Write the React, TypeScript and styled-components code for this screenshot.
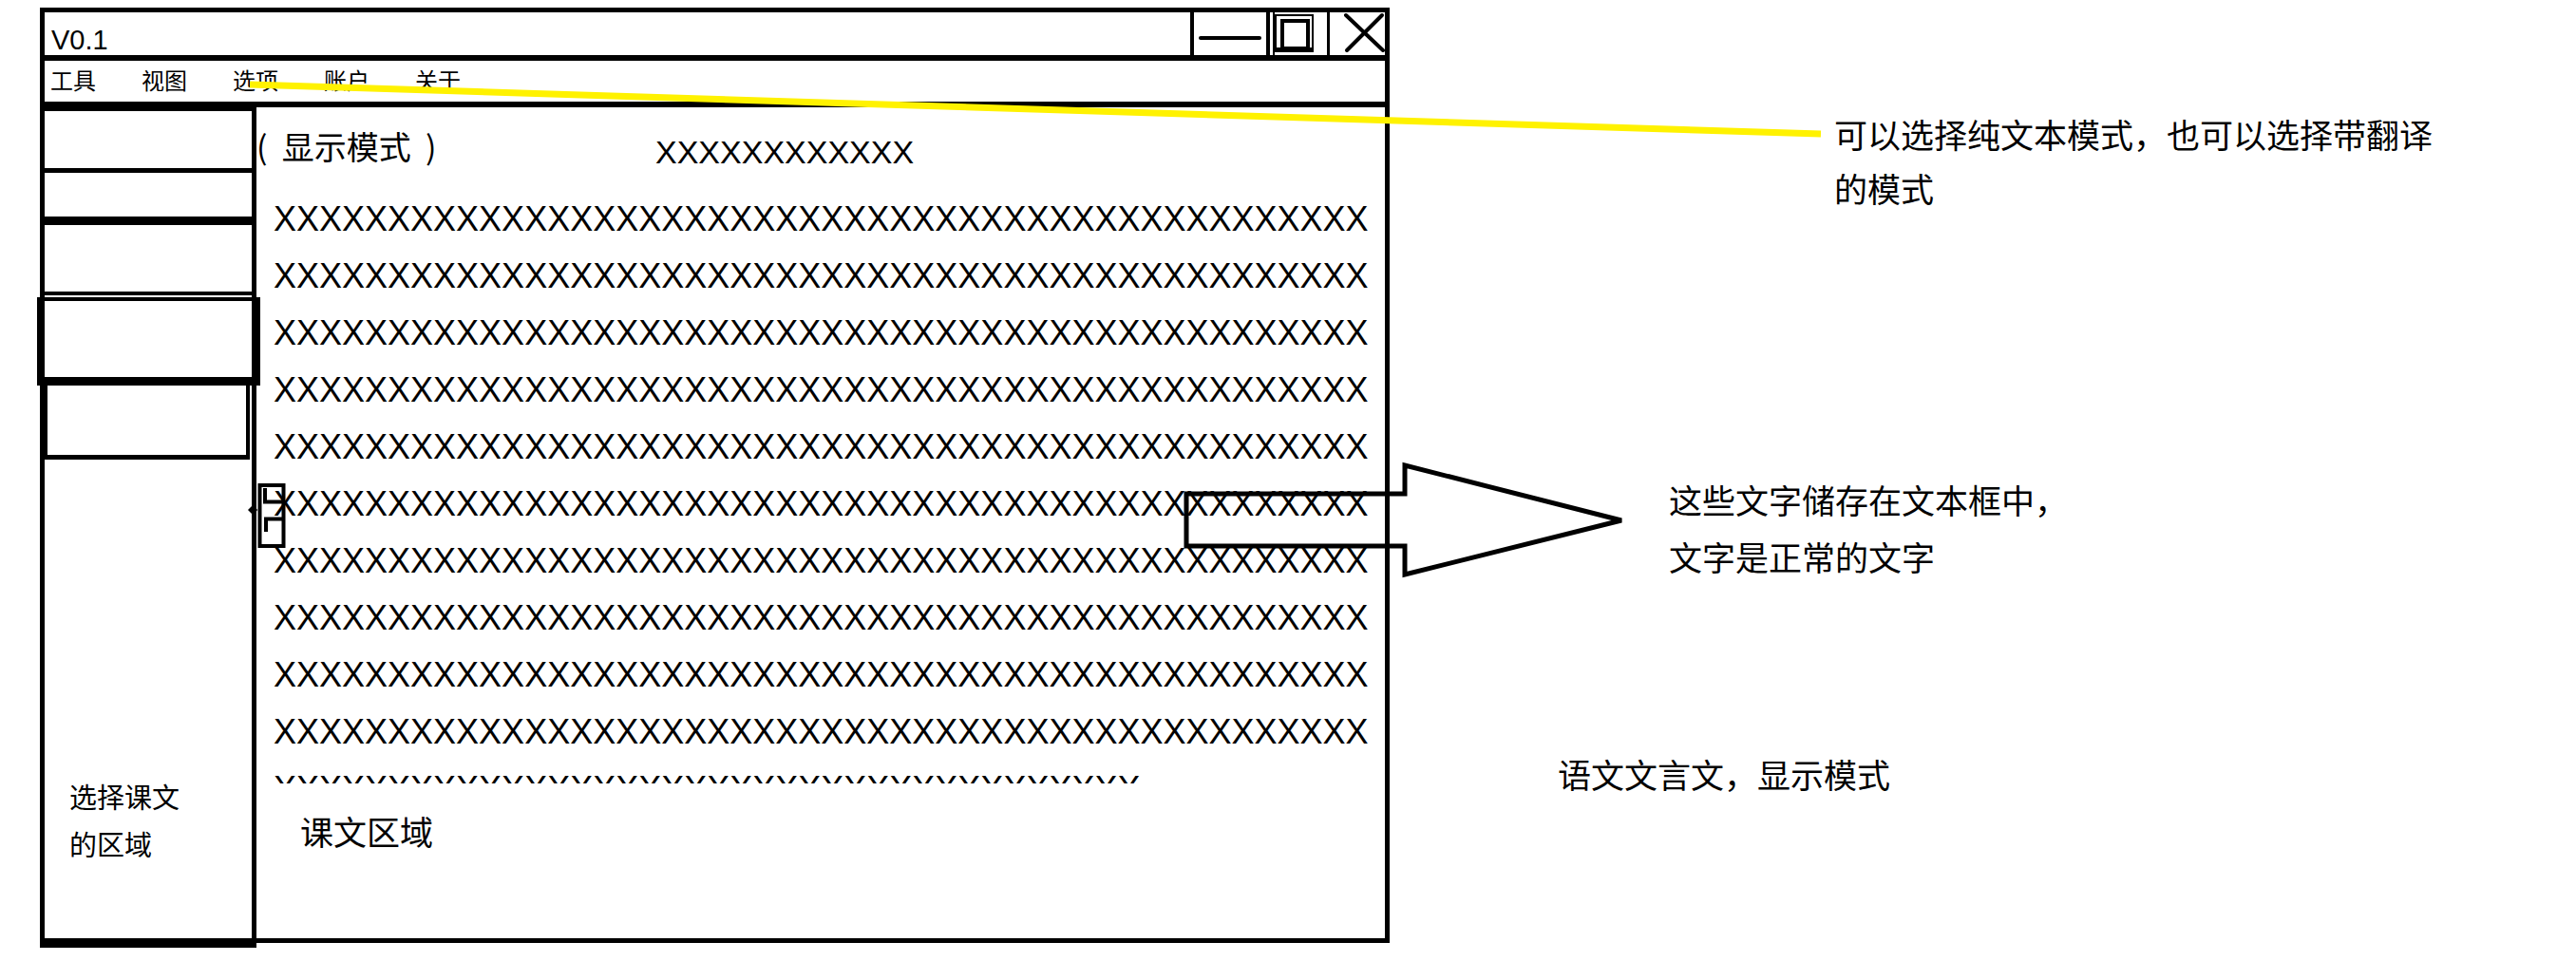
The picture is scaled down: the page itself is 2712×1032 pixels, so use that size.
import React from "react";
import styled, { createGlobalStyle } from "styled-components";

const CJK = `"Noto Sans CJK SC", "Noto Sans", sans-serif`;
const LATIN = `"Liberation Sans", Arial, sans-serif`;

const GlobalStyle = createGlobalStyle`
  *, *::before, *::after { box-sizing: border-box; }
  html, body { margin: 0; padding: 0; background: #ffffff; }
  body { font-family: ${CJK}; color: #000000; }
`;

const Canvas = styled.div`
  position: relative;
  width: 2712px;
  height: 1032px;
  overflow: hidden;
  background: #ffffff;
  padding: 8px 0 0 42px;
`;

const Window = styled.div`
  width: 1421px;
  height: 985px;
  border: 5px solid #000;
  display: flex;
  flex-direction: column;
`;

const TitleBar = styled.div`
  height: 51px;
  flex-shrink: 0;
  border-bottom: 6px solid #000;
  display: flex;
  justify-content: space-between;
  padding-left: 7px;
`;

const TitleText = styled.div`
  align-self: flex-end;
  margin-bottom: 1px;
  font-family: ${LATIN};
  font-size: 29px;
  line-height: 30px;
`;

const Controls = styled.svg`
  display: block;
  flex-shrink: 0;
  width: 208px;
  height: 45px;
`;

const MenuBar = styled.div`
  height: 49px;
  flex-shrink: 0;
  border-bottom: 6px solid #000;
  display: flex;
  align-items: center;
  gap: 48px;
  padding: 0 0 5px 6px;
  font-family: ${CJK};
  font-size: 24px;
`;

const MenuItem = styled.span`
  display: block;
`;

const Body = styled.div`
  flex: 1;
  min-height: 0;
  display: flex;
`;

const Sidebar = styled.aside`
  width: 228px;
  flex-shrink: 0;
  margin-left: -5px;
  margin-bottom: -10px;
  border-left: 5px solid #000;
  border-right: 5px solid #000;
  border-top: 4px solid #000;
  border-bottom: 10px solid #000;
  display: flex;
  flex-direction: column;
`;

const Slot = styled.div<{ $h: number; $b: number; $gap?: number }>`
  height: ${(p) => p.$h}px;
  flex-shrink: 0;
  border-bottom: ${(p) => p.$b}px solid #000;
  margin-bottom: ${(p) => p.$gap ?? 0}px;
`;

const FramedSlot = styled.div`
  height: 93px;
  flex-shrink: 0;
  margin: 0 -9px 0 -8px;
  border-style: solid;
  border-color: #000;
  border-width: 4px 9px 9px 8px;
`;

const InsetSlot = styled.div`
  height: 78px;
  flex-shrink: 0;
  margin-right: 2px;
  border-style: solid;
  border-color: #000;
  border-width: 0 4px 5px 3px;
`;

const SideNote = styled.div`
  margin-top: auto;
  padding: 0 0 75px 26px;
  font-family: ${CJK};
  font-size: 29px;
  line-height: 50px;
`;

const Main = styled.main`
  flex: 1;
  min-width: 0;
  display: flex;
  flex-direction: column;
  padding-top: 21px;
`;

const HeaderRow = styled.div`
  display: flex;
  align-items: flex-start;
`;

const ModeLabel = styled.div`
  width: 420px;
  flex-shrink: 0;
  font-family: ${CJK};
  font-size: 34px;
  line-height: 40px;
  white-space: pre;
`;

const HeaderTitle = styled.div`
  margin-top: 6px;
  font-family: ${LATIN};
  font-size: 34px;
  line-height: 40px;
`;

const TextBox = styled.div`
  margin: 21px 0 0 18px;
  height: 624px;
  overflow: hidden;
  font-family: ${LATIN};
  font-size: 36px;
  line-height: 60px;
  white-space: nowrap;
`;

const TextLine = styled.div`
  height: 60px;
`;

const LessonLabel = styled.div`
  margin: 30px 0 0 46px;
  font-family: ${CJK};
  font-size: 35px;
  line-height: 40px;
`;

const Overlay = styled.svg`
  position: absolute;
  left: 0;
  top: 0;
  width: 2712px;
  height: 1032px;
  pointer-events: none;
`;

const Note = styled.div<{ $x: number; $y: number; $lh: number }>`
  position: absolute;
  left: ${(p) => p.$x}px;
  top: ${(p) => p.$y}px;
  font-family: ${CJK};
  font-size: 35px;
  line-height: ${(p) => p.$lh}px;
  white-space: nowrap;
`;

const menus = ["工具", "视图", "选项", "账户", "关于"];
const fullRow = "X".repeat(48);
const rows = [...Array(10).fill(fullRow), "X".repeat(38)];

function WindowControls() {
  return (
    <Controls viewBox="0 0 208 45">
      <rect x={3} y={0} width={4} height={45} fill="#000" />
      <rect x={12} y={25} width={66} height={4} rx={2} fill="#000" />
      <rect x={83} y={0} width={4} height={45} fill="#000" />
      <rect x={90} y={0} width={2} height={45} fill="#000" />
      <rect x={93} y={3} width={39} height={38} fill="none" stroke="#000" strokeWidth={2} />
      <rect x={100} y={9} width={27} height={29} fill="none" stroke="#000" strokeWidth={4} />
      <rect x={92} y={37} width={41} height={5} fill="#000" />
      <rect x={147} y={0} width={3} height={45} fill="#000" />
      <line x1={167} y1={3} x2={206} y2={40} stroke="#000" strokeWidth={4} strokeLinecap="round" />
      <line x1={205} y1={3} x2={168} y2={40} stroke="#000" strokeWidth={4} strokeLinecap="round" />
    </Controls>
  );
}

export default function App() {
  return (
    <>
      <GlobalStyle />
      <Canvas>
        <Window>
          <TitleBar>
            <TitleText>V0.1</TitleText>
            <WindowControls />
          </TitleBar>
          <MenuBar>
            {menus.map((m) => (
              <MenuItem key={m}>{m}</MenuItem>
            ))}
          </MenuBar>
          <Body>
            <Sidebar>
              <Slot $h={65} $b={5} />
              <Slot $h={55} $b={9} />
              <Slot $h={74} $b={4} $gap={2} />
              <FramedSlot />
              <InsetSlot />
              <SideNote>
                选择课文
                <br />
                的区域
              </SideNote>
            </Sidebar>
            <Main>
              <HeaderRow>
                <ModeLabel>{"(  显示模式  )"}</ModeLabel>
                <HeaderTitle>XXXXXXXXXXXX</HeaderTitle>
              </HeaderRow>
              <TextBox>
                {rows.map((r, i) => (
                  <TextLine key={i}>{r}</TextLine>
                ))}
              </TextBox>
              <LessonLabel>课文区域</LessonLabel>
            </Main>
          </Body>
        </Window>

        <Note $x={1931} $y={112} $lh={57}>
          可以选择纯文本模式，也可以选择带翻译
          <br />
          的模式
        </Note>
        <Note $x={1757} $y={496} $lh={60}>
          这些文字储存在文本框中，
          <br />
          文字是正常的文字
        </Note>
        <Note $x={1640} $y={795} $lh={40}>
          语文文言文，显示模式
        </Note>

        <Overlay viewBox="0 0 2712 1032">
          <line x1={263} y1={89} x2={1917} y2={141} stroke="#FFF200" strokeWidth={7} />
          <polygon
            points="1249,520 1479,520 1479,490 1707,548 1479,605 1479,575 1249,575"
            fill="none"
            stroke="#000"
            strokeWidth={5}
            strokeLinejoin="miter"
          />
          <rect x={273.5} y={511} width={25} height={64} fill="none" stroke="#000" strokeWidth={4} />
          <path d="M279 514 L279 528.5 L298 528.5" fill="none" stroke="#000" strokeWidth={4} />
          <path d="M298 546.5 L280 546.5 L280 560" fill="none" stroke="#000" strokeWidth={4} />
          <polygon points="261,537 267,531 271,537 267,543" fill="#000" />
        </Overlay>
      </Canvas>
    </>
  );
}
